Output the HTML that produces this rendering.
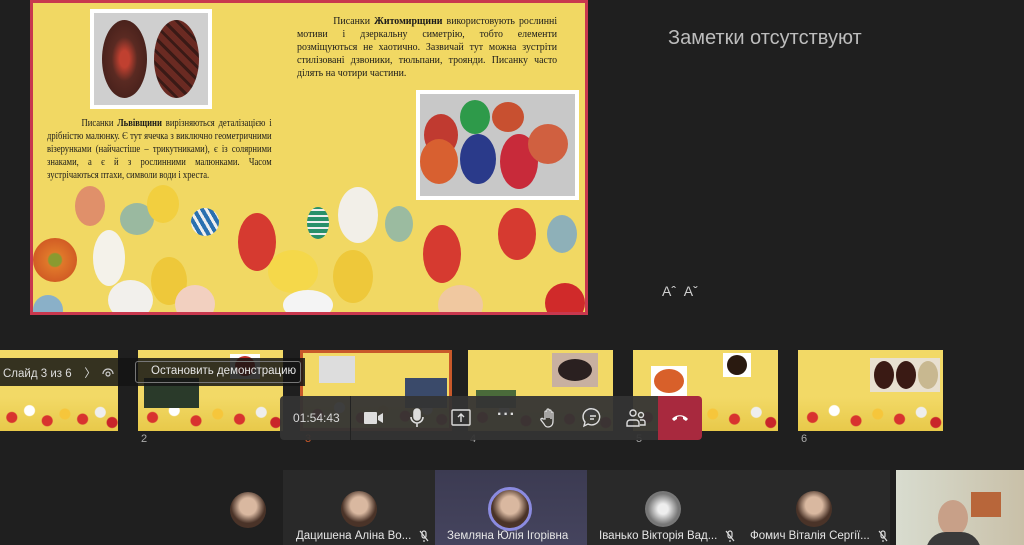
<!DOCTYPE html>
<html><head><meta charset="utf-8"><style>
*{margin:0;padding:0;box-sizing:border-box}
html,body{width:1024px;height:545px}
body{background:#1f1f1f;position:relative;overflow:hidden;font-family:"Liberation Sans",sans-serif}
.a{position:absolute}
.e{position:absolute;border-radius:50%}
.slide{left:30px;top:0;width:558px;height:315px;background:#f1d863;border:3px solid #c8384e;overflow:hidden}
.st{font-family:"Liberation Serif",serif;font-size:11px;line-height:13px;color:#1a1a1a;transform-origin:0 0}
.st div{text-align:justify;text-align-last:justify;white-space:nowrap}
.st div.l{text-align-last:left}
.th{position:absolute;top:350px;height:81px;background:#f2d966;overflow:hidden}
.th .fl{position:absolute;left:0;right:0;bottom:0;height:34px;background:
radial-gradient(circle at 10% 60%,#d8332f 5px,transparent 6px),
radial-gradient(circle at 25% 40%,#fff 5px,transparent 6px),
radial-gradient(circle at 40% 70%,#d8332f 5px,transparent 6px),
radial-gradient(circle at 55% 50%,#f6c63b 5px,transparent 6px),
radial-gradient(circle at 70% 65%,#d8332f 5px,transparent 6px),
radial-gradient(circle at 85% 45%,#eee 5px,transparent 6px),
radial-gradient(circle at 95% 75%,#c9252a 5px,transparent 6px),
linear-gradient(#f2d966,#e8c94a)}
.num{position:absolute;top:433px;color:#aaa;font-size:11px}
.tile{position:absolute;top:470px;height:75px;background:#292929;overflow:hidden}
.av{position:absolute;border-radius:50%;background:radial-gradient(circle at 50% 40%,#d9b8a0 30%,#4a3328 60%)}
.nm{position:absolute;top:60px;color:#e6e6e6;font-size:11.5px;white-space:nowrap}
.ic{position:absolute;top:406px;width:26px;height:24px}
.mic{display:inline-block;vertical-align:middle;margin-left:8px}
</style></head><body>

<div class="a slide">
 <div class="a" style="left:57px;top:6px;width:122px;height:100px;background:#fff;padding:4px">
  <div style="width:100%;height:100%;background:#cfcfcf;position:relative">
   <div class="e" style="left:8px;top:7px;width:45px;height:78px;background:radial-gradient(#c04030 15%,#5a2a22 40%,#3a1a16)"></div>
   <div class="e" style="left:60px;top:7px;width:45px;height:78px;background:repeating-linear-gradient(45deg,#6a2a22 0 6px,#3a1a16 6px 9px)"></div>
  </div>
 </div>
 <div class="a st" style="left:264px;top:12px;width:289px;transform:scaleX(0.9)">
  <div>&nbsp;&nbsp;&nbsp;&nbsp;&nbsp;&nbsp;&nbsp;&nbsp;&nbsp;Писанки <b>Житомирщини</b> використовують рослинні</div>
  <div>мотиви і дзеркальну симетрію, тобто елементи</div>
  <div>розміщуються не хаотично. Зазвичай тут можна зустріти</div>
  <div>стилізовані дзвоники, тюльпани, троянди. Писанку часто</div>
  <div class="l">ділять на чотири частини.</div>
 </div>
 <div class="a st" style="left:14px;top:114px;width:288px;transform:scaleX(0.78)">
  <div>&nbsp;&nbsp;&nbsp;&nbsp;&nbsp;&nbsp;&nbsp;&nbsp;&nbsp;Писанки <b>Львівщини</b> вирізняються деталізацією і</div>
  <div>дрібністю малюнку. Є тут ячечка з виключно геометричними</div>
  <div>візерунками (найчастіше – трикутниками), є із солярними</div>
  <div>знаками, а є й з рослинними малюнками. Часом</div>
  <div class="l">зустрічаються птахи, символи води і хреста.</div>
 </div>
 <div class="a" style="left:383px;top:87px;width:163px;height:110px;background:#fff;padding:4px">
  <div style="width:100%;height:100%;background:#c8c8c8;position:relative;overflow:hidden">
   <div class="e" style="left:4px;top:20px;width:34px;height:42px;background:#c03a30"></div>
   <div class="e" style="left:40px;top:6px;width:30px;height:34px;background:#2e9a4a"></div>
   <div class="e" style="left:0;top:45px;width:38px;height:45px;background:#d86030"></div>
   <div class="e" style="left:40px;top:40px;width:36px;height:50px;background:#2a3a8a"></div>
   <div class="e" style="left:80px;top:40px;width:38px;height:55px;background:#c82a3a"></div>
   <div class="e" style="left:72px;top:8px;width:32px;height:30px;background:#c85030"></div>
   <div class="e" style="left:108px;top:30px;width:40px;height:40px;background:#d06040"></div>
  </div>
 </div>
 <div class="e" style="left:42px;top:183px;width:30px;height:40px;background:#e0906a"></div>
 <div class="e" style="left:87px;top:200px;width:34px;height:32px;background:#9ab9a0"></div>
 <div class="e" style="left:114px;top:182px;width:32px;height:38px;background:#f2cf3f"></div>
 <div class="e" style="left:158px;top:205px;width:28px;height:28px;background:repeating-linear-gradient(60deg,#2a70b0 0 4px,#eee 4px 7px)"></div>
 <div class="e" style="left:274px;top:204px;width:22px;height:32px;background:repeating-linear-gradient(0deg,#28906a 0 4px,#eee 4px 6px)"></div>
 <div class="e" style="left:305px;top:184px;width:40px;height:56px;background:#f2efe8"></div>
 <div class="e" style="left:352px;top:203px;width:28px;height:36px;background:#9bbba0"></div>
 <div class="e" style="left:514px;top:212px;width:30px;height:38px;background:#8eb0b8"></div>
 <div class="e" style="left:205px;top:210px;width:38px;height:58px;background:#d63a30"></div>
 <div class="e" style="left:390px;top:222px;width:38px;height:58px;background:#d63a30"></div>
 <div class="e" style="left:465px;top:205px;width:38px;height:52px;background:#d63a30"></div>
 <div class="e" style="left:60px;top:227px;width:32px;height:56px;background:#f4f2ea"></div>
 <div class="e" style="left:0;top:235px;width:44px;height:44px;background:radial-gradient(#8a9a30 20%,#e0782a 25%,#c84a20)"></div>
 <div class="e" style="left:118px;top:254px;width:36px;height:48px;background:#eec83a"></div>
 <div class="e" style="left:300px;top:247px;width:40px;height:53px;background:#eec83a"></div>
 <div class="e" style="left:235px;top:247px;width:50px;height:43px;background:#f5d84a"></div>
 <div class="e" style="left:75px;top:277px;width:45px;height:40px;background:#f2f0ec"></div>
 <div class="e" style="left:142px;top:282px;width:40px;height:38px;background:#f2d0c0"></div>
 <div class="e" style="left:250px;top:287px;width:50px;height:30px;background:#f4f4f4"></div>
 <div class="e" style="left:405px;top:282px;width:45px;height:40px;background:#f0c8a0"></div>
 <div class="e" style="left:512px;top:280px;width:40px;height:40px;background:#d02a2a"></div>
 <div class="e" style="left:0;top:292px;width:30px;height:30px;background:#8ab0c8"></div>
</div>

<div class="a" style="left:668px;top:27px;color:#bdbdbd;font-size:20px">Заметки отсутствуют</div>
<div class="a" style="left:662px;top:283px;color:#cfcfcf;font-size:14px">Aˆ&nbsp;&nbsp;Aˇ</div>

<div class="th" style="left:0;width:118px"><div class="fl"></div></div>
<div class="th" style="left:138px;width:145px"><div class="fl"></div><div class="a" style="left:92px;top:4px;width:30px;height:25px;background:#fff"><div class="e" style="left:5px;top:2px;width:20px;height:20px;background:#c0302a"></div></div><div class="a" style="left:6px;top:28px;width:55px;height:30px;background:#2a3a2a"></div></div>
<div class="th" style="left:300px;width:152px;border:3px solid #c8582a"><div class="fl"></div><div class="a" style="left:16px;top:3px;width:36px;height:27px;background:#ddd"></div><div class="a" style="left:102px;top:25px;width:42px;height:30px;background:#3a4a6a"></div></div>
<div class="th" style="left:468px;width:145px"><div class="fl"></div><div class="a" style="left:84px;top:3px;width:46px;height:34px;background:#c8b0a0"><div class="e" style="left:6px;top:6px;width:34px;height:22px;background:#2a2020"></div></div><div class="a" style="left:8px;top:40px;width:40px;height:18px;background:#4a6a3a"></div></div>
<div class="th" style="left:633px;width:145px"><div class="fl"></div><div class="a" style="left:90px;top:3px;width:28px;height:24px;background:#fff"><div class="e" style="left:4px;top:2px;width:20px;height:20px;background:#2a1a10"></div></div><div class="a" style="left:18px;top:16px;width:36px;height:30px;background:#fff"><div class="e" style="left:3px;top:3px;width:30px;height:24px;background:#d8602a"></div></div></div>
<div class="th" style="left:798px;width:145px"><div class="fl"></div><div class="a" style="left:72px;top:8px;width:70px;height:34px;background:#e8e0d0"><div class="e" style="left:4px;top:3px;width:20px;height:28px;background:#3a1a14"></div><div class="e" style="left:26px;top:3px;width:20px;height:28px;background:#3a1a14"></div><div class="e" style="left:48px;top:3px;width:20px;height:28px;background:#c8b890"></div></div></div>
<div class="num" style="left:141px">2</div><div class="num" style="left:305px;color:#c8582a">3</div><div class="num" style="left:470px">4</div><div class="num" style="left:636px">5</div><div class="num" style="left:801px">6</div>

<div class="a" style="left:0;top:358px;width:305px;height:28px;background:rgba(20,20,20,.85)"></div>
<div class="a" style="left:3px;top:365px;color:#ddd;font-size:11.5px">Слайд 3 из 6&nbsp;&nbsp;&nbsp;&nbsp;〉</div>
<svg class="a" style="left:101px;top:365px" width="14" height="14" viewBox="0 0 14 14" fill="none" stroke="#ccc" stroke-width="1.2"><path d="M2 9a5 5 0 0 1 10 0"/><circle cx="7" cy="9" r="2"/></svg>
<div class="a" style="left:135px;top:361px;width:166px;height:22px;border:1px solid #777;border-radius:3px;color:#e6e6e6;font-size:11.5px;padding:3px 0 0 15px">Остановить демонстрацию</div>

<div class="a" style="left:280px;top:396px;width:420px;height:44px;background:rgba(52,52,52,.95);border-radius:4px"></div>
<div class="a" style="left:350px;top:396px;width:1px;height:44px;background:#222"></div>
<div class="a" style="left:293px;top:411px;color:#d8d8d8;font-size:12px">01:54:43</div>
<svg class="ic" style="left:361px" viewBox="0 0 26 24" fill="#ddd"><rect x="3" y="6" width="13" height="12" rx="1"/><path d="M17 10l5-3v10l-5-3z"/></svg>
<svg class="ic" style="left:404px" viewBox="0 0 26 24" fill="none" stroke="#ddd" stroke-width="1.6"><rect x="10" y="3" width="6" height="11" rx="3" fill="#ddd"/><path d="M7 11a6 6 0 0 0 12 0M13 17v4"/></svg>
<svg class="ic" style="left:448px" viewBox="0 0 26 24" fill="none" stroke="#ddd" stroke-width="1.4"><rect x="4" y="4" width="18" height="15" rx="1"/><path d="M13 16V8M10 11l3-3 3 3"/></svg>
<div class="a" style="left:497px;top:406px;color:#ddd;font-size:16px;font-weight:bold;letter-spacing:1px">···</div>
<svg class="ic" style="left:536px" viewBox="0 0 26 24" fill="none" stroke="#ddd" stroke-width="1.3"><path d="M9 13V6a1 1 0 0 1 2 0v6V4a1 1 0 0 1 2 0v8V5a1 1 0 0 1 2 0v8V7a1 1 0 0 1 2 0v8c0 4-2 6-5 6-2 0-3-1-4-3l-3-4a1 1 0 0 1 2-1z"/></svg>
<svg class="ic" style="left:580px" viewBox="0 0 26 24" fill="none" stroke="#ddd" stroke-width="1.4"><path d="M13 3a8 8 0 1 1-5 15l-4 2 1-4A8 8 0 0 1 13 3z"/><path d="M10 10h6M10 13h4"/></svg>
<svg class="ic" style="left:623px" viewBox="0 0 26 24" fill="none" stroke="#ddd" stroke-width="1.4"><circle cx="10" cy="7" r="3"/><circle cx="18" cy="9" r="2.5"/><path d="M4 20v-3a3 3 0 0 1 3-3h6a3 3 0 0 1 3 3v3zM17 14h3a2 2 0 0 1 2 2v3h-5"/></svg>
<div class="a" style="left:658px;top:396px;width:44px;height:44px;background:#a8293e;border-radius:0 4px 4px 0"></div>
<svg class="a" style="left:670px;top:410px" width="20" height="14" viewBox="0 0 20 14" fill="#fff"><path d="M2 9c4-5 12-5 16 0l-2 2-3-2V7c-2-1-4-1-6 0v2l-3 2z"/></svg>

<div class="av" style="left:230px;top:492px;width:36px;height:36px"></div>
<div class="tile" style="left:283px;width:152px"><div class="av" style="left:58px;top:21px;width:36px;height:36px"></div><div class="nm" style="left:13px">Дацишена Аліна Во...<svg class="mic" width="10" height="12" viewBox="0 0 10 12" fill="none" stroke="#ddd" stroke-width="1.2"><rect x="3" y="1" width="4" height="7" rx="2"/><path d="M1 1l8 10M5 10v2"/></svg></div></div>
<div class="tile" style="left:435px;width:152px;background:linear-gradient(#3c3b52,#45445e)"><div class="av" style="left:53px;top:17px;width:44px;height:44px;border:3px solid #8b8be0"></div><div class="nm" style="left:12px">Землянa Юлія Ігорівна</div></div>
<div class="tile" style="left:587px;width:153px"><div class="av" style="left:58px;top:21px;width:36px;height:36px;background:radial-gradient(#eee 20%,#777 60%)"></div><div class="nm" style="left:12px">Іванько Вікторія Вад...<svg class="mic" width="10" height="12" viewBox="0 0 10 12" fill="none" stroke="#ddd" stroke-width="1.2"><rect x="3" y="1" width="4" height="7" rx="2"/><path d="M1 1l8 10M5 10v2"/></svg></div></div>
<div class="tile" style="left:740px;width:150px"><div class="av" style="left:56px;top:21px;width:36px;height:36px"></div><div class="nm" style="left:10px">Фомич Віталія Сергії...<svg class="mic" width="10" height="12" viewBox="0 0 10 12" fill="none" stroke="#ddd" stroke-width="1.2"><rect x="3" y="1" width="4" height="7" rx="2"/><path d="M1 1l8 10M5 10v2"/></svg></div></div>
<div class="tile" style="left:896px;width:128px;background:linear-gradient(90deg,#d8dccf,#c9c0a8)"><div class="a" style="left:75px;top:22px;width:30px;height:25px;background:#b8663a"></div><div class="e" style="left:42px;top:30px;width:30px;height:36px;background:#c8a088"></div><div class="a" style="left:30px;top:62px;width:55px;height:20px;background:#3a3a3a;border-radius:20px 20px 0 0"></div></div>
</body></html>
